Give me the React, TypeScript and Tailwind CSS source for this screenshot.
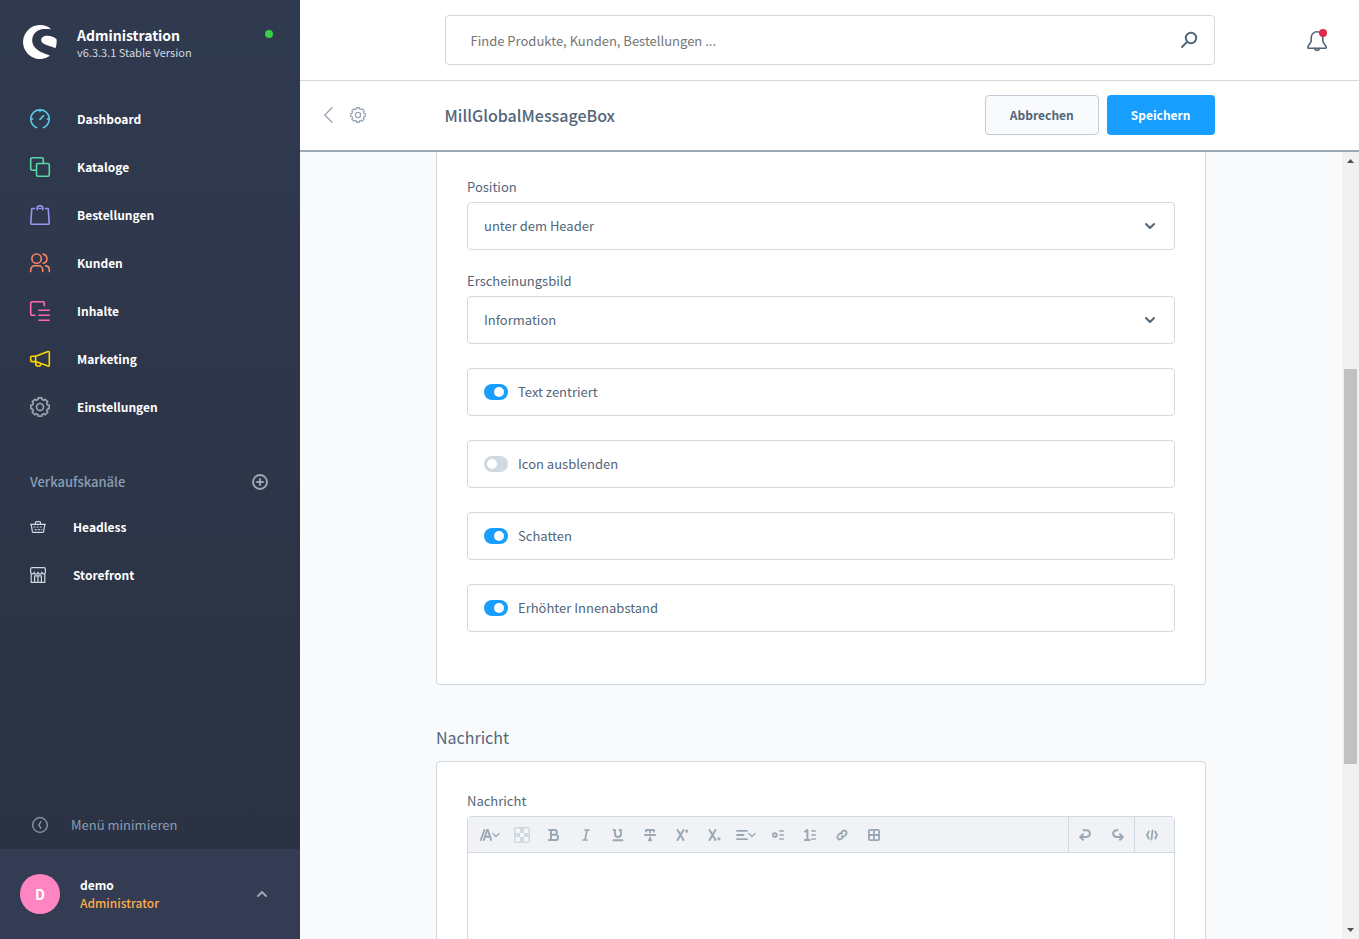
import React from 'react';

type IconProps = { size?: number; stroke?: number; className?: string; children: React.ReactNode };

function Icon({ size = 20, stroke = 1.6, className = '', children }: IconProps) {
  return (
    <svg
      width={size}
      height={size}
      viewBox={`0 0 ${size} ${size}`}
      fill="none"
      stroke="currentColor"
      strokeWidth={stroke}
      strokeLinecap="round"
      strokeLinejoin="round"
      className={`shrink-0 overflow-visible ${className}`}
      aria-hidden="true"
    >
      {children}
    </svg>
  );
}

// eight shallow teeth around the centre
function gearPath(c: number, outer: number, inner: number) {
  const points: string[] = [];
  for (let i = 0; i < 8; i++) {
    const base = (i * Math.PI) / 4 - Math.PI / 2;
    const corners = [
      [inner, -0.27],
      [outer, -0.2],
      [outer, 0.2],
      [inner, 0.27],
    ];
    corners.forEach(([r, a]) => {
      points.push(`${(c + r * Math.cos(base + a)).toFixed(2)} ${(c + r * Math.sin(base + a)).toFixed(2)}`);
    });
  }
  return `M${points.join('L')}Z`;
}

function Logo() {
  return (
    <svg width="34" height="34" viewBox="0 0 34 34" fill="#fff" className="shrink-0" aria-hidden="true">
      <path d="M28.2 4.2A17 17 0 1 0 27 30.8c-2.500-1.300-6-2.300-9-3.800C13 24.500 9.200 20.500 9.200 15.500 9.200 9 14 4.500 21 4.100c2.500-.1 5 .1 7.200.1Z" />
      <path d="M33.500 14.200c-2-1.800-5.500-3.400-9.300-3.400-3.500 0-6 1.800-6 4.200 0 2.800 3 4.300 6.800 5.500 2.700.9 5.400 1.500 7.400 2.700a17 17 0 0 0 1.100-9Z" />
    </svg>
  );
}

const navItems = [
  {
    label: 'Dashboard',
    color: 'text-[#5ac8e8]',
    icon: (
      <>
        <path d="M6.6 18.6A9.2 9.2 0 1 1 13.4 18.6" />
        <path d="M10 1v1.600M1 10h1.800M17.200 10H19M10 10.400l3.600-3.800" />
      </>
    ),
  },
  {
    label: 'Kataloge',
    color: 'text-[#57d9a3]',
    icon: (
      <>
        <path d="M6 13.3H2.2a1.5 1.5 0 0 1-1.5-1.5V2.2A1.5 1.5 0 0 1 2.2.7h9.6a1.5 1.5 0 0 1 1.5 1.5V6" />
        <rect x="6.5" y="6.5" width="12.8" height="12.8" rx="1.5" />
      </>
    ),
  },
  {
    label: 'Bestellungen',
    color: 'text-[#a092f0]',
    icon: (
      <>
        <path d="M4.600 3.500H1.800L.8 17.800a1.300 1.300 0 0 0 1.300 1.500h15.800a1.300 1.300 0 0 0 1.300-1.500l-1-14.300h-2.800M9.200 3.500h1.600" />
        <path d="M7.200 4.800V3.200a2.800 2.500 0 0 1 5.600 0v1.600" />
      </>
    ),
  },
  {
    label: 'Kunden',
    color: 'text-[#ff8562]',
    icon: (
      <>
        <circle cx="6.6" cy="5.7" r="4.7" />
        <path d="M.7 18.600v-1.800a4 4 0 0 1 4-4h4a4 4 0 0 1 4 4v1.800M13.200 1.100a4.700 4.700 0 0 1 0 9.200M15.600 12.900a4 4 0 0 1 3.700 4v1.700" />
      </>
    ),
  },
  {
    label: 'Inhalte',
    color: 'text-[#ff68b4]',
    icon: (
      <path d="M4.800 14.300H2.200A1.500 1.500 0 0 1 .7 12.800V2.200A1.500 1.500 0 0 1 2.200.7h10.600a1.500 1.500 0 0 1 1.500 1.500v2.600M9 9.200h10.300M9 14.300h10.300M9 19.300h10.300" />
    ),
  },
  {
    label: 'Marketing',
    color: 'text-[#ffd700]',
    icon: (
      <>
        <path d="M5.600 7.200 18 2.500a1 1 0 0 1 1.300.9v12.800a1 1 0 0 1-1.300.9L5.600 12.600ZM5.600 7.200H1.700a1 1 0 0 0-1 1v3.400a1 1 0 0 0 1 1h3.900" />
        <path d="M5.800 12.800v1.600a2.500 2.500 0 0 0 5 .6" />
      </>
    ),
  },
  {
    label: 'Einstellungen',
    color: 'text-[#9aa8b5]',
    icon: (
      <>
        <path d={gearPath(10, 9.3, 7.7)} />
        <circle cx="10" cy="10" r="3.5" />
      </>
    ),
  },
];

const channels = [
  {
    label: 'Headless',
    icon: (
      <>
        <path d="M.6 5.300h14.800M1.200 5.500l1.200 7.200a.9.900 0 0 0 .9.700h9.400a.9.900 0 0 0 .9-.7l1.200-7.200M5.300 5.100V4a1.500 1.500 0 0 1 1.500-1.400h2.400A1.500 1.500 0 0 1 10.700 4v1.100" />
        <path strokeDasharray="1 2.200" d="M3.800 8h9M5.200 10.600h6.600" />
      </>
    ),
  },
  {
    label: 'Storefront',
    icon: (
      <>
        <path d="M2.200.6h11.600a1.600 1.600 0 0 1 1.600 1.600v2.600a1.800 1.800 0 0 1-3.600.4 1.800 1.800 0 0 1-3.800 0 1.800 1.800 0 0 1-3.800 0 1.800 1.800 0 0 1-3.600-.4V2.200A1.600 1.600 0 0 1 2.200.6Z" />
        <path d="M1.200 7v8.400h13.600V7M4.600 15.400V8.800h6.800v6.600M8 8.800v6.600" />
      </>
    ),
  },
];

function Sidebar() {
  return (
    <aside className="flex w-[300px] shrink-0 flex-col bg-linear-to-b from-[#303a4f] to-[#2a3142]">
      <div className="flex items-start pt-[25px] pr-[27px] pl-[23px]">
        <Logo />
        <div className="ml-5 flex-1">
          <div className="text-[14px] leading-5 font-bold text-white">Administration</div>
          <div className="text-[11px] leading-[14px] text-[#d1d9e0]">v6.3.3.1 Stable Version</div>
        </div>
        <span className="mt-[5px] size-2 rounded-full bg-[#37d046]" />
      </div>

      <nav className="mt-9">
        {navItems.map((item) => (
          <a key={item.label} href="#" className="flex h-12 items-center gap-[27px] px-[30px] text-[12px] font-semibold text-white">
            <Icon className={item.color}>{item.icon}</Icon>
            {item.label}
          </a>
        ))}
      </nav>

      <div className="mt-[39px] flex h-6 items-center justify-between pr-8 pl-[30px]">
        <span className="text-[13px] font-medium text-[#8a9fb3]">Verkaufskanäle</span>
        <button type="button" aria-label="Verkaufskanal hinzufügen" className="text-[#9aa8b5]">
          <Icon size={16} stroke={1.9}>
            <circle cx="8" cy="8" r="7" />
            <path d="M8 5v6M5 8h6" />
          </Icon>
        </button>
      </div>

      <nav className="mt-[9px]">
        {channels.map((item) => (
          <a key={item.label} href="#" className="flex h-12 items-center gap-[27px] px-[30px] text-[12px] font-semibold text-white">
            <Icon size={16} stroke={1.2} className="text-[#d1d9e0]">{item.icon}</Icon>
            {item.label}
          </a>
        ))}
      </nav>

      <button type="button" className="mt-auto flex h-12 items-center gap-[23px] px-8 text-[13px] text-[#8a9fb3]">
        <Icon size={16} stroke={1.3}>
          <circle cx="8" cy="8" r="7.3" />
          <path d="M8.800 4.800 6.800 8l2 3.200" />
        </Icon>
        Menü minimieren
      </button>

      <button type="button" className="flex h-[90px] items-center bg-[#333c52] pr-8 pl-5 text-left">
        <span className="flex size-10 items-center justify-center rounded-full bg-[#ff85c2] text-[14px] font-bold text-white">D</span>
        <span className="ml-5 flex flex-1 flex-col">
          <span className="text-[12px] leading-[18px] font-semibold text-white">demo</span>
          <span className="text-[12px] leading-[18px] font-medium text-[#ffab4a]">Administrator</span>
        </span>
        <Icon size={12} stroke={2} className="text-[#9aa8b5]">
          <path d="m2 8 4-4 4 4" />
        </Icon>
      </button>
    </aside>
  );
}

function TopBar() {
  return (
    <header className="grid h-[81px] shrink-0 grid-cols-[1fr_minmax(0,770px)_1fr] items-center border-b border-[#d1d9e0] bg-white">
      <div />
      <div className="flex h-[50px] items-center rounded border border-[#d1d9e0] pr-4 pl-[25px]">
        <input
          type="search"
          aria-label="Suche"
          placeholder="Finde Produkte, Kunden, Bestellungen ..."
          className="h-full flex-1 text-[13px] outline-none placeholder:text-[#757575]"
        />
        <button type="button" aria-label="Suchen" className="text-[#52667a]">
          <Icon size={18} stroke={2}>
            <circle cx="11" cy="7" r="5.2" />
            <path d="M7 11l-5 5" />
          </Icon>
        </button>
      </div>
      <button type="button" aria-label="Benachrichtigungen" className="relative mr-8 justify-self-end text-[#52667a]">
        <Icon size={20} stroke={1.6}>
          <path d="M10 1.800a5.800 5.800 0 0 0-5.800 5.800v3.200c0 2.600-3.400 4.300-3.400 6.600 0 .5.300.8.800.8h16.800c.5 0 .8-.3.800-.8 0-2.300-3.400-4-3.400-6.600V7.600A5.800 5.800 0 0 0 10 1.800Z" />
          <path d="M7.900 18.400a2.100 1.800 0 0 0 4.200 0" />
        </Icon>
        <span className="absolute -top-px right-0 size-2 rounded-full bg-[#de294c]" />
      </button>
    </header>
  );
}

function SmartBar() {
  return (
    <div className="grid h-[71px] shrink-0 grid-cols-[1fr_minmax(0,770px)_1fr] items-center border-b-2 border-[#9aa8b5] bg-white pb-px">
      <div className="flex items-center gap-3.5 pl-5 text-[#9aa8b5]">
        <button type="button" aria-label="Zurück">
          <Icon size={16} stroke={1.4}>
            <path d="M12 .8 4.800 8l7.200 7.200" />
          </Icon>
        </button>
        <button type="button" aria-label="Einstellungen">
          <Icon size={16} stroke={1.3}>
            <path d={gearPath(8, 7.4, 6.1)} />
            <circle cx="8" cy="8" r="2.6" />
          </Icon>
        </button>
      </div>
      <div className="flex items-center gap-2">
        <h1 className="flex-1 text-[16px] font-medium text-[#52667a]">MillGlobalMessageBox</h1>
        <button type="button" className="h-10 rounded border border-[#c2ccd6] bg-[#f9fafb] px-6 text-[12px] font-semibold text-[#52667a]">
          Abbrechen
        </button>
        <button type="button" className="h-10 rounded bg-[#189eff] px-6 text-[12px] font-semibold text-white">
          Speichern
        </button>
      </div>
      <div />
    </div>
  );
}

function SelectField({ id, label, value }: { id: string; label: string; value: string }) {
  return (
    <div className="mb-[22px]">
      <label htmlFor={id} className="block pb-[7px] text-[13px] leading-[17px]">{label}</label>
      <div className="grid items-center">
        <select
          id={id}
          defaultValue={value}
          className="col-start-1 row-start-1 h-12 w-full appearance-none rounded border border-[#d1d9e0] bg-white px-4 text-[13px] outline-none"
        >
          <option>{value}</option>
        </select>
        <Icon size={12} stroke={2} className="pointer-events-none col-start-1 row-start-1 mr-[19px] justify-self-end">
          <path d="m2 4 4 4 4-4" />
        </Icon>
      </div>
    </div>
  );
}

function SwitchField({ label, checked = false }: { label: string; checked?: boolean }) {
  return (
    <label className="mb-6 flex h-12 items-center gap-2.5 rounded border border-[#d1d9e0] px-4 text-[13px]">
      <input
        type="checkbox"
        defaultChecked={checked}
        className="flex h-4 w-6 appearance-none items-center rounded-full bg-[#d1d9e0] px-[3px] before:size-2.5 before:rounded-full before:bg-white checked:justify-end checked:bg-[#189eff] checked:pr-1"
      />
      {label}
    </label>
  );
}

const formatTools = [
  {
    label: 'Hintergrundfarbe',
    size: 16,
    icon: (
      <g stroke="none" fill="#d1d9e0">
        <rect width="16" height="16" rx="2" />
        <path fill="#f4f6f8" d="M1.500 1.500H6V6H1.500ZM10 1.500h4.500V6H10ZM6 6h4v4H6ZM1.500 10H6v4.500H1.500ZM10 10h4.500v4.500H10Z" />
      </g>
    ),
  },
  { label: 'Fett', size: 12, icon: <path d="M1 1h5.500a2.400 2.400 0 0 1 0 4.800H3M3 1v10M1 11h6.500a2.600 2.600 0 0 0 0-5.200H6.500" /> },
  { label: 'Kursiv', size: 12, icon: <path strokeWidth="1.7" d="M5 1h4M3 11h4M7 1 5 11" /> },
  { label: 'Unterstrichen', size: 12, icon: <path strokeWidth="1.9" d="M1.500 1H3v4a3 3 0 0 0 6 0V1H7.500M1.500 11.300h9" /> },
  { label: 'Durchgestrichen', size: 12, icon: <path strokeWidth="1.9" d="M2 2.500V1h8v1.500M6 1v2.500M1 6h10M6 8.500V11M4.800 11.200h2.400" /> },
  { label: 'Hochgestellt', size: 12, icon: <><path d="M1.500 1 7.500 11M7.500 1 1.500 11" /><circle cx="10.7" cy="2.2" r=".6" /></> },
  { label: 'Tiefgestellt', size: 12, icon: <><path d="M1.500 1 7.500 11M7.500 1 1.500 11" /><circle cx="10.9" cy="9.8" r=".6" /></> },
];

const insertTools = [
  { label: 'Liste', icon: <><circle cx="2.8" cy="6" r="1.9" strokeWidth="1.9" /><path strokeWidth="1.7" d="M8 2h3.200M8 6h3.200M8 10h3.200" /></> },
  { label: 'Nummerierte Liste', icon: <><path strokeWidth="1.9" d="M.9 2.600 3.400 1v10M1 11h4.800" /><path strokeWidth="1.7" d="M8 2h3.200M8 6h3.200M8 10h3.200" /></> },
  { label: 'Link', icon: <path strokeWidth="1.8" d="M5.200 3.600 7 1.900a2.400 2.400 0 0 1 3.300 3.300L8.600 7a2.200 2.200 0 0 1-2.800.3M6.800 8.400 5 10.100a2.400 2.400 0 0 1-3.300-3.300L3.400 5a2.200 2.200 0 0 1 2.800-.3" /> },
  { label: 'Tabelle', icon: <><rect x=".9" y=".9" width="10.2" height="10.2" rx="1" strokeWidth="1.8" /><path strokeWidth="1.8" d="M6 1v10M1 6h10" /></> },
];

function ToolButton({ label, children }: { label: string; children: React.ReactNode }) {
  return (
    <button type="button" aria-label={label} className="flex h-full w-8 items-center justify-center">
      {children}
    </button>
  );
}

function DropCaret() {
  return (
    <Icon size={8} stroke={1.2}>
      <path d="m.8 2.500 3.200 3 3.200-3" />
    </Icon>
  );
}

function Editor() {
  return (
    <div className="flex flex-col rounded-t border border-[#d1d9e0]">
      <div className="flex h-9 border-b border-[#d1d9e0] bg-[#f0f2f5] text-[#9aa8b5]">
        <div className="flex flex-1 pl-1.5">
          <ToolButton label="Textstil">
            <Icon size={12} stroke={1.9}>
              <path d="M.9 11 4.400 1M3.900 11 7.100 1h.8l3.200 10M5.600 7.800h4.200" />
            </Icon>
            <DropCaret />
          </ToolButton>
          {formatTools.map((tool) => (
            <ToolButton key={tool.label} label={tool.label}>
              <Icon size={tool.size} stroke={2}>{tool.icon}</Icon>
            </ToolButton>
          ))}
          <ToolButton label="Ausrichtung">
            <Icon size={12} stroke={1.8}>
              <path d="M1 1.800h10M1 6h6.500M1 10.200h10" />
            </Icon>
            <DropCaret />
          </ToolButton>
          {insertTools.map((tool) => (
            <ToolButton key={tool.label} label={tool.label}>
              <Icon size={12}>{tool.icon}</Icon>
            </ToolButton>
          ))}
        </div>
        <div className="flex gap-px border-l border-[#d1d9e0]">
          <ToolButton label="Rückgängig">
            <Icon size={12} stroke={2}>
              <path d="M4.500 1.200h3a3.300 3.300 0 0 1 0 6.800H1.500M4 5.300 1.200 8 4 10.800" />
            </Icon>
          </ToolButton>
          <ToolButton label="Wiederholen">
            <Icon size={12} stroke={2}>
              <path d="M5.500 1.200h-1a3.300 3.300 0 0 0 0 6.800h6M8 5.300 10.800 8 8 10.800" />
            </Icon>
          </ToolButton>
        </div>
        <div className="flex border-l border-[#d1d9e0] pr-1.5 pl-px">
          <ToolButton label="Code">
            <Icon size={12} stroke={1.8}>
              <path d="M2.800 2.500 1 6l1.800 3.500M9.200 2.500 11 6 9.200 9.500M6.500 1.500l-1 9" />
            </Icon>
          </ToolButton>
        </div>
      </div>
      <textarea id="nachricht" className="h-40 resize-none rounded-none p-4 text-[13px] outline-none" />
    </div>
  );
}

function ScrollTrack() {
  return (
    <div className="flex w-[17px] shrink-0 flex-col items-center bg-[#f1f1f1]" aria-hidden="true">
      <svg width="17" height="17" viewBox="0 0 17 17" fill="#505050">
        <path d="M5 11h7L8.500 7Z" />
      </svg>
      <div className="grow-[200] basis-0" />
      <div className="w-[13px] grow-[395] basis-0 bg-[#c1c1c1]" />
      <div className="grow-[158] basis-0" />
      <svg width="17" height="17" viewBox="0 0 17 17" fill="#505050">
        <path d="M5 6h7l-3.500 4Z" />
      </svg>
    </div>
  );
}

export default function App() {
  return (
    <div className="flex h-screen overflow-hidden bg-[#f9fafb] font-['Noto_Sans_CJK_SC','Open_Sans',sans-serif] text-[#52667a]">
      <Sidebar />
      <div className="flex min-w-0 flex-1 flex-col">
        <TopBar />
        <SmartBar />
        <div className="flex min-h-0 flex-1">
          <main className="min-w-0 flex-1 overflow-hidden">
            <div className="mx-auto max-w-[770px]">
              <section className="rounded-b border border-t-0 border-[#d1d9e0] bg-white px-[30px] pt-[26px] pb-7">
                <SelectField id="position" label="Position" value="unter dem Header" />
                <SelectField id="erscheinungsbild" label="Erscheinungsbild" value="Information" />
                <div className="pt-0.5">
                  <SwitchField label="Text zentriert" checked />
                  <SwitchField label="Icon ausblenden" />
                  <SwitchField label="Schatten" checked />
                  <SwitchField label="Erhöhter Innenabstand" checked />
                </div>
              </section>
              <h2 className="mt-10 mb-3 text-[16px] leading-6">Nachricht</h2>
              <section className="rounded border border-[#d1d9e0] bg-white p-[30px]">
                <label htmlFor="nachricht" className="block pb-[7px] text-[13px] leading-[17px]">Nachricht</label>
                <Editor />
              </section>
            </div>
          </main>
          <ScrollTrack />
        </div>
      </div>
    </div>
  );
}
